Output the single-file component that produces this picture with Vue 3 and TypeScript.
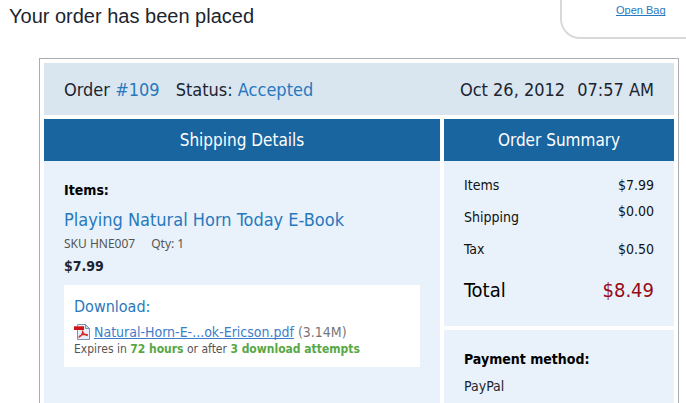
<script setup lang="ts">
interface SummaryLine {
  label: string
  amount: string
  raised?: boolean
}

const order = {
  number: '#109',
  status: 'Accepted',
  date: 'Oct 26, 2012',
  time: '07:57 AM',
  payment: 'PayPal',
}

const item = {
  name: 'Playing Natural Horn Today E-Book',
  sku: 'HNE007',
  quantity: 1,
  price: '$7.99',
  file: 'Natural-Horn-E-...ok-Ericson.pdf',
  size: '3.14M',
}

const lines: SummaryLine[] = [
  { label: 'Items', amount: '$7.99' },
  { label: 'Shipping', amount: '$0.00', raised: true },
  { label: 'Tax', amount: '$0.50' },
]
</script>

<template>
  <div class="page">
    <header class="top">
      <h1>Your order has been placed</h1>
      <aside class="bag"><a href="#bag">Open Bag</a></aside>
    </header>

    <main class="order">
      <div class="bar">
        <div class="bar-group">
          <span>Order <a href="#order">{{ order.number }}</a></span>
          <span>Status: <span class="accent">{{ order.status }}</span></span>
        </div>
        <div class="when">
          <span>{{ order.date }}</span>
          <span>{{ order.time }}</span>
        </div>
      </div>

      <div class="columns">
        <section class="column">
          <h2>Shipping Details</h2>
          <div class="panel details">
            <h3>Items:</h3>
            <a class="product" href="#product">{{ item.name }}</a>
            <p class="meta"><span>SKU {{ item.sku }}</span><span>Qty: {{ item.quantity }}</span></p>
            <p class="price">{{ item.price }}</p>
            <div class="download">
              <h4>Download:</h4>
              <p class="file">
                <svg class="pdf" viewBox="0 0 16 16" aria-hidden="true">
                  <path d="M3.500 .5h8l4 4v11h-12z" fill="#e9effa" stroke="#8292ae" />
                  <path d="M11.500 .5v4h4z" fill="#cbd8ec" stroke="#8292ae" />
                  <path d="M0 2h10v4H0z" fill="#c91518" />
                  <path d="M0 2h10v1H0z" fill="#e4514d" />
                  <path d="M4.500 13.500C7 12 9 9 8.500 6.500C8.800 9.500 10.500 11 13.800 11.700M5 12.500C7.500 10.500 10.500 10 13.800 10.700" fill="none" stroke="#d62a29" stroke-width="1.200" />
                </svg>
                <a href="#download">{{ item.file }}</a>
                <span>({{ item.size }})</span>
              </p>
              <p class="expires">Expires in <b>72 hours</b> or after <b>3 download attempts</b></p>
            </div>
          </div>
        </section>

        <section class="column">
          <h2>Order Summary</h2>
          <div class="panel summary">
            <table>
              <tbody>
                <tr v-for="line in lines" :key="line.label">
                  <th scope="row">{{ line.label }}</th>
                  <td :class="{ raised: line.raised }">{{ line.amount }}</td>
                </tr>
              </tbody>
              <tfoot>
                <tr>
                  <th scope="row">Total</th>
                  <td>$8.49</td>
                </tr>
              </tfoot>
            </table>
          </div>
          <div class="panel payment">
            <h3>Payment method:</h3>
            <p>{{ order.payment }}</p>
          </div>
        </section>
      </div>
    </main>
  </div>
</template>

<style>
body {
  background: #fff;
}
</style>

<style scoped>
.page {
  display: flex;
  flex-direction: column;
  height: 100vh;
  overflow: hidden;
  color: #1c2430;
  font-family: "DejaVu Sans Condensed", "Noto Sans", sans-serif;
  font-size: 14px;
}
h1, h2, h3, h4, p {
  margin: 0;
  font-weight: 400;
}
a, .accent {
  color: #2878be;
  text-decoration: none;
}
.top {
  display: flex;
  justify-content: space-between;
  align-items: flex-start;
  flex: none;
  height: 58px;
}
h1 {
  padding: 4px 0 0 9px;
  font: 20px/24px "Liberation Sans", sans-serif;
}
.bag {
  box-sizing: border-box;
  display: flex;
  width: 126px;
  height: 39px;
  padding: 4px 0 0 54px;
  border: solid #d9d9d9;
  border-width: 0 0 2px 2px;
  border-bottom-left-radius: 20px;
}
.bag a {
  height: 12px;
  overflow: hidden;
  font: 11px/13px "Liberation Sans", sans-serif;
  text-decoration: underline;
  text-decoration-skip-ink: none;
}
.order {
  display: flex;
  flex-direction: column;
  flex: 1;
  gap: 4px;
  margin: 0 7px 0 39px;
  padding: 4px 4px 0;
  border: 1px solid #aaadb1;
  border-bottom: 0;
}
.bar {
  display: flex;
  align-items: center;
  justify-content: space-between;
  height: 52px;
  padding: 0 20px;
  background: #d9e6f0;
  font-size: 18px;
}
.bar-group {
  display: flex;
  gap: 16px;
}
.when {
  display: flex;
  gap: 12px;
}
.columns {
  display: grid;
  grid-template-columns: 1fr 230px;
  gap: 4px;
  flex: 1;
}
.column {
  display: flex;
  flex-direction: column;
}
h2 {
  background: #1965a0;
  color: #fff;
  font-size: 17px;
  line-height: 42px;
  text-align: center;
}
.panel {
  background: #e9f2fa;
}
.details {
  flex: 1;
  padding: 20px;
}
h3 {
  color: #000;
  font-size: 14px;
  line-height: 18px;
  font-weight: 700;
}
.product {
  display: block;
  margin-top: 9px;
  font-size: 18px;
  line-height: 24px;
}
.meta {
  display: flex;
  gap: 16px;
  margin-top: 3px;
  color: #555;
  font-family: "Noto Sans", sans-serif;
  font-size: 12px;
  line-height: 18px;
}
.price {
  margin-top: 4px;
  font-weight: 700;
  line-height: 18px;
}
.download {
  margin-top: 10px;
  padding: 10px;
  background: #fff;
}
h4 {
  color: #2878be;
  font-size: 16px;
  line-height: 24px;
}
.file {
  display: flex;
  align-items: center;
  gap: 4px;
  margin-top: 4px;
  color: #777;
  line-height: 18px;
}
.file a {
  color: #3c7dc9;
  text-decoration: underline;
  text-decoration-skip-ink: none;
}
.pdf {
  width: 16px;
  height: 16px;
}
.expires {
  color: #555;
  font-size: 12px;
  line-height: 16px;
}
.expires b {
  color: #57a845;
}
.summary {
  padding: 8px 20px 12px;
  margin-bottom: 4px;
}
table {
  width: 100%;
  border-collapse: collapse;
  color: #111;
}
th, td {
  height: 32px;
  padding: 0;
  line-height: 20px;
  font-weight: 400;
  text-align: left;
}
td {
  text-align: right;
}
td.raised {
  vertical-align: top;
}
tfoot th, tfoot td {
  height: 49px;
  font-size: 20px;
}
tfoot th {
  color: #000;
}
tfoot td {
  color: #970b16;
}
.payment {
  flex: 1;
  padding: 20px;
}
.payment p {
  margin-top: 8px;
  line-height: 20px;
}
</style>
